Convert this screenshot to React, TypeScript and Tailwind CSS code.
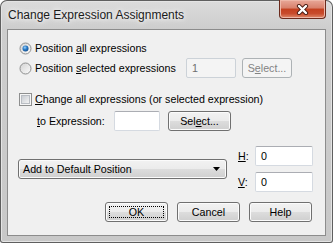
import type { ReactNode } from 'react';

const face =
  'rounded-[3px] border border-[#707070] bg-[linear-gradient(#f2f2f2,#ebebeb_50%,#dddddd_50%,#cfcfcf)] shadow-[inset_0_0_0_1px_#fbfbfb] text-black';
const btn = `flex items-center justify-center ${face}`;

const input = 'flex items-center rounded-[2px] border border-[#d5dae1] border-t-[#abadb3] bg-white pl-[5px] text-black';

function Radio({ checked }: { checked?: boolean }) {
  return (
    <svg width="13" height="13" viewBox="0 0 13 13" className="shrink-0">
      <defs>
        <linearGradient id="rbg" x1="0" y1="0" x2="1" y2="1">
          <stop offset="0" stopColor="#d2d2d2" />
          <stop offset="1" stopColor="#fcfcfc" />
        </linearGradient>
        <radialGradient id="rdot" cx="0.4" cy="0.35" r="0.7">
          <stop offset="0" stopColor="#9fd4fa" />
          <stop offset="0.45" stopColor="#2f80cc" />
          <stop offset="1" stopColor="#0e4a88" />
        </radialGradient>
      </defs>
      <circle cx="6.5" cy="6.5" r="5.5" fill="url(#rbg)" stroke="#8e8f8f" />
      {checked ? <circle cx="6.5" cy="6.5" r="3" fill="url(#rdot)" /> : null}
    </svg>
  );
}

function Checkbox() {
  return (
    <svg width="13" height="13" viewBox="0 0 13 13" className="shrink-0">
      <defs>
        <linearGradient id="cbg" x1="0" y1="0" x2="1" y2="1">
          <stop offset="0" stopColor="#c6cad0" />
          <stop offset="1" stopColor="#f5f5f5" />
        </linearGradient>
      </defs>
      <rect x="0.5" y="0.5" width="12" height="12" fill="#f6f6f6" stroke="#8e8f8f" />
      <rect x="2.5" y="2.5" width="8" height="8" fill="url(#cbg)" stroke="#b9bdc3" />
    </svg>
  );
}

function CloseButton() {
  return (
    <div className="flex h-[19px] w-[47px] items-center justify-center rounded-b-[4px] border border-t-0 border-[#6b2a1c] bg-[linear-gradient(#e8a899,#d8806b_45%,#c3401f_50%,#c84b2c_75%,#de8a6b)] shadow-[inset_0_0_0_1px_#eeb7a8]">
      <svg width="15" height="11" viewBox="0 0 15 11">
        <path d="M4 2 L11 9 M11 2 L4 9" stroke="#4b1d14" strokeWidth="4.2" strokeLinecap="round" />
        <path d="M4 2 L11 9 M11 2 L4 9" stroke="#ffffff" strokeWidth="2.4" strokeLinecap="round" />
      </svg>
    </div>
  );
}

function Row({ className, children }: { className: string; children: ReactNode }) {
  return <div className={`flex items-center ${className}`}>{children}</div>;
}

export default function App() {
  return (
    <div className="flex h-[243px] w-[333px] flex-col rounded-t-[7px] rounded-b-[3px] bg-[linear-gradient(#dcdcdc,#cdcdcd_30px,#c8c8c8)] font-['Liberation_Sans',Arial,sans-serif] text-[10.7px] leading-[13px] text-black shadow-[inset_0_0_0_1px_#5f5f5f,inset_0_0_0_2px_#e4e4e4]">
      <div className="flex h-[29px] justify-between pl-[8px] pr-[7px]">
        <div className="mt-[7px] h-[16px] text-[12px] leading-[16px] text-[#1b1b1b] [text-shadow:0_0_8px_#fff,0_0_4px_#fff]">
          Change Expression Assignments
        </div>
        <CloseButton />
      </div>

      <div className="mx-[7px] flex h-[207px] w-[319px] flex-col border border-[#8c8c8c] bg-[#f0f0f0]">
        <Row className="mt-[10px] h-[16px] gap-[3px] pl-[11px]">
          <Radio checked />
          <span>
            Position <u>a</u>ll expressions
          </span>
        </Row>

        <Row className="mt-[2px] h-[20px] pl-[11px]">
          <div className="flex w-[167px] items-center gap-[3px]">
            <Radio />
            <span>
              Position <u>s</u>elected expressions
            </span>
          </div>
          <div className="flex h-[20px] w-[50px] items-center rounded-[2px] border border-[#ccd2d8] bg-[#f4f4f4] pl-[5px] text-[#6d6d6d]">
            1
          </div>
          <div className="ml-[6px] flex h-[20px] w-[50px] items-center justify-center rounded-[3px] border border-[#adb2b5] bg-[#f4f4f4] text-[#838383]">
            S<u>e</u>lect...
          </div>
        </Row>

        <Row className="mt-[13px] h-[16px] gap-[3px] pl-[11px]">
          <Checkbox />
          <span>
            <u>C</u>hange all expressions (or selected expression)
          </span>
        </Row>

        <Row className="mt-[4px] h-[20px] pl-[29px]">
          <span className="w-[77px]">
            <u>t</u>o Expression:
          </span>
          <div className={`${input} h-[20px] w-[46px]`} />
          <div className={`${btn} ml-[8px] h-[20px] w-[63px]`}>
            Sel<u>e</u>ct...
          </div>
        </Row>

        <Row className="mt-[15px] h-[46px] pl-[10px]">
          <div className={`flex items-center justify-between ${face} h-[20px] w-[209px] pl-[4px] pr-[6px]`}>
            <span>Add to Default Position</span>
            <svg width="7" height="4" viewBox="0 0 7 4">
              <path d="M0 0 H7 L3.5 4 Z" fill="#000" />
            </svg>
          </div>
          <div className="ml-[11px] flex flex-col gap-[6px]">
            <div className="flex h-[20px] items-center">
              <span className="w-[17px]">
                <u>H</u>:
              </span>
              <div className={`${input} h-[20px] w-[58px]`}>0</div>
            </div>
            <div className="flex h-[20px] items-center">
              <span className="w-[17px]">
                <u>V</u>:
              </span>
              <div className={`${input} h-[20px] w-[58px]`}>0</div>
            </div>
          </div>
        </Row>

        <Row className="mt-[10px] h-[20px] justify-end gap-[9px] pr-[13px]">
          <div className={`${btn} relative h-[20px] w-[63px] border-[#3c7fb1] shadow-[inset_0_0_0_1px_#b4dcf5]`}>
            <span className="pointer-events-none absolute inset-[3px] border border-dotted border-black" />
            OK
          </div>
          <div className={`${btn} h-[20px] w-[63px]`}>Cancel</div>
          <div className={`${btn} h-[20px] w-[63px]`}>Help</div>
        </Row>
      </div>
    </div>
  );
}
